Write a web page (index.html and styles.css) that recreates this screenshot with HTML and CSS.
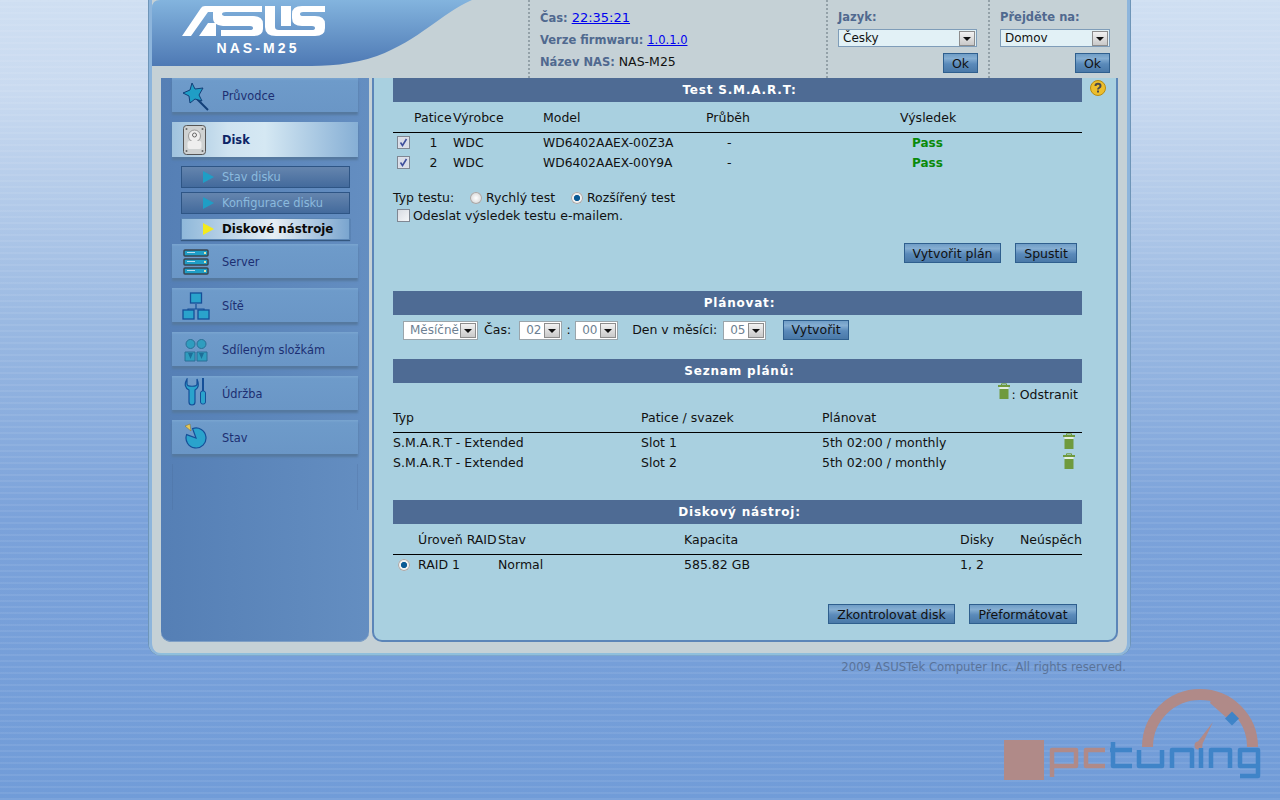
FILE: index.html
```html
<!DOCTYPE html>
<html lang="cs">
<head>
<meta charset="utf-8">
<title>ASUS NAS-M25</title>
<link rel="stylesheet" href="styles.css">
</head>
<body>
<svg class="defs" width="0" height="0" aria-hidden="true">
  <symbol id="trash" viewBox="0 0 14 17">
    <path d="M4.5 2V.8h5V2" fill="none" stroke="#6f9a3e"/>
    <rect x="1" y="2" width="12" height="2" fill="#6f9a3e"/>
    <rect x="2.5" y="4" width="9" height="2" fill="#e4efe0"/>
    <path d="M2.500 6h9v10h-9z" fill="#6f9a3e"/>
  </symbol>
  <symbol id="check" viewBox="0 0 13 13">
    <rect x=".5" y=".5" width="12" height="12" fill="#dfe3ec" stroke="#7f8793"/>
    <rect x="1.500" y="1.500" width="10" height="10" fill="#d9dde8"/>
    <path d="M3.500 6.500l2 3 4-6.500" fill="none" stroke="#3e4f9c" stroke-width="1.600"/>
  </symbol>
</svg>
<div class="shell">
  <header class="head">
    <svg class="head-art" viewBox="0 0 330 66" width="330" height="66" aria-hidden="true">
      <defs>
        <linearGradient id="hg" x1="0" y1="0" x2="0" y2="1"><stop offset="0" stop-color="#83b4de"/><stop offset="1" stop-color="#4e79b4"/></linearGradient>
      </defs>
      <path d="M0 8Q0 0 8 0H320C288 14 268 40 225 56C200 65 175 66 150 66H0Z" fill="url(#hg)"/>
    </svg>
    <div class="brand">
      <svg class="logo" viewBox="182 6 144 31" width="144" height="31" role="img" aria-label="ASUS">
        <path fill="#fff" d="M182 36L201 8Q202 6 205 6H262V12H226Q222 12 222 14Q222 16 226 16H253Q263 16 263 24V29Q263 36 253 36H221V30H250Q253 30 253 28Q253 26 250 26H226Q213 26 213 18V12H208L191 36ZM208 23H216V36H199Z"/>
        <path fill="#fff" d="M265 6H275V27Q275 30 279 30H290V36H276Q265 36 265 27ZM281 6H291V26H281Z"/>
        <path fill="#fff" d="M325 6V12H303Q300 12 300 14Q300 16 303 16H315Q325 16 325 24V28Q325 36 315 36H284V30H312Q315 30 315 28Q315 26 312 26H302Q292 26 292 18V14Q292 6 302 6Z"/>
      </svg>
      <div class="model">NAS-M25</div>
    </div>
    <div class="info">
      <div class="info-row"><b>Čas:</b> <a href="#" class="time-link">22:35:21</a></div>
      <div class="info-row"><b>Verze firmwaru:</b> <a href="#" class="small-link">1.0.1.0</a></div>
      <div class="info-row"><b>Název NAS:</b> NAS-M25</div>
    </div>
    <div class="pick pick-lang">
      <b>Jazyk:</b>
      <div class="sel sel-head sel-lang"><span>Česky</span><i class="arrow"></i></div>
      <div class="pick-ok"><button class="btn btn-ok">Ok</button></div>
    </div>
    <div class="pick pick-go">
      <b>Přejděte na:</b>
      <div class="sel sel-head sel-go"><span>Domov</span><i class="arrow"></i></div>
      <div class="pick-ok"><button class="btn btn-ok">Ok</button></div>
    </div>
  </header>

  <div class="body-row">
    <nav class="side">
      <a class="item">
        <span class="ico"><svg width="30" height="30" viewBox="0 0 30 30"><path d="M16 18L27 29" stroke="#123f78" stroke-width="2"/><path d="M11 2l3 6 8-1-4 7 3 6-7-2-5 4-1-7-6-3 7-3z" fill="#1f9ec6" stroke="#123f78"/></svg></span>Průvodce
      </a>
      <a class="item item-on">
        <span class="ico ico-disk"><svg width="23" height="30" viewBox="0 0 23 30"><rect x=".5" y=".5" width="22" height="29" rx="3" fill="#cfd2d2" stroke="#555"/><circle cx="11.500" cy="11" r="6" fill="#eee" stroke="#999"/><circle cx="11.500" cy="10" r="2" fill="none" stroke="#666"/><rect x="4.500" y="16" width="14" height="8" rx="2" fill="#eee"/><g fill="#666"><circle cx="3.500" cy="4" r="1"/><circle cx="19.500" cy="4" r="1"/><circle cx="3.500" cy="26" r="1"/><circle cx="19.500" cy="26" r="1"/></g></svg></span>Disk
      </a>
      <div class="subs">
        <a class="sub"><i class="tri"></i>Stav disku</a>
        <a class="sub"><i class="tri"></i>Konfigurace disku</a>
        <a class="sub sub-on"><i class="tri"></i>Diskové nástroje</a>
      </div>
      <a class="item">
        <span class="ico"><svg width="26" height="26" viewBox="0 0 26 26"><g fill="#1f9ec6" stroke="#3a4550" stroke-width="1.500"><rect x="1" y="1" width="24" height="6" rx="1"/><rect x="1" y="10" width="24" height="6" rx="1"/><rect x="1" y="19" width="24" height="6" rx="1"/></g><g fill="#e0e6b0"><rect x="21" y="3" width="2" height="2"/><rect x="21" y="12" width="2" height="2"/><rect x="21" y="21" width="2" height="2"/></g><g fill="#bde"><rect x="4" y="3" width="8" height="1"/><rect x="4" y="12" width="8" height="1"/><rect x="4" y="21" width="8" height="1"/></g></svg></span>Server
      </a>
      <a class="item">
        <span class="ico"><svg width="28" height="28" viewBox="0 0 28 28"><path d="M14 12V17M6 22V17H22V22" fill="none" stroke="#154f98" stroke-width="1.200"/><g fill="#2aa3cc" stroke="#154f98" stroke-width="1.300"><rect x="8.500" y="1" width="11" height="10"/><rect x="1" y="18" width="11" height="9"/><rect x="16" y="18" width="11" height="9"/></g></svg></span>Sítě
      </a>
      <a class="item">
        <span class="ico"><svg width="24" height="24" viewBox="0 0 24 24"><g fill="#2f9dbf" stroke="#2a6f96"><circle cx="6.500" cy="6" r="4.500"/><circle cx="17.500" cy="6" r="4.500"/><path d="M1 14h10v9H1zM13 14h10v9H13z"/></g><path d="M4 15l2.500 6 2.500-6M15 15l2.500 6 2.500-6" fill="#1c6f98"/></svg></span>Sdíleným složkám
      </a>
      <a class="item">
        <span class="ico ico-up"><svg width="24" height="28" viewBox="0 0 24 28"><path d="M3 1C0 6 1 10 5 12V24C5 28 11 28 11 24V12C15 10 15 6 13 1V6C13 9 3 9 3 6Z" fill="#2aa3cc" stroke="#154f98" stroke-width="1.200"/><rect x="18" y="0" width="2" height="13" fill="#154f98"/><rect x="16.500" y="13" width="5" height="13" rx="2" fill="#2aa3cc" stroke="#154f98"/></svg></span>Údržba
      </a>
      <a class="item">
        <span class="ico ico-up"><svg width="24" height="26" viewBox="0 0 24 26"><path d="M12 15L8.600 5.600A10 10 0 1 1 2.600 11.600Z" fill="#2aa3cc" stroke="#154f98" stroke-width="1.200"/><path d="M1 3L6 1 7 8Z" fill="#e6c95a" stroke="#7a6a30" stroke-width=".5"/></svg></span>Stav
      </a>
      <div class="trail"></div>
    </nav>

    <main class="panel">
      <svg class="help" width="16" height="16" viewBox="0 0 16 16" role="img" aria-label="Nápověda"><circle cx="8" cy="8" r="7.500" fill="#edbe2c" stroke="#b88c10"/><path d="M5.500 6C5.500 3 10.500 3 10.500 6C10.500 8 8 7.500 8 9.500" fill="none" stroke="#4a4a4a" stroke-width="2"/><rect x="7" y="10.500" width="2" height="2" fill="#4a4a4a"/></svg>

      <h2 class="bar">Test S.M.A.R.T:</h2>
      <div class="grid g-smart thead"><span></span><span>Patice</span><span>Výrobce</span><span>Model</span><span>Průběh</span><span>Výsledek</span></div>
      <div class="grid g-smart row"><svg class="cb"><use href="#check"/></svg><span class="num">1</span><span>WDC</span><span class="serial">WD6402AAEX-00Z3A</span><span class="dash">-</span><span class="pass">Pass</span></div>
      <div class="grid g-smart row"><svg class="cb"><use href="#check"/></svg><span class="num">2</span><span>WDC</span><span class="serial">WD6402AAEX-00Y9A</span><span class="dash">-</span><span class="pass">Pass</span></div>

      <div class="testtype"><span class="tt-label">Typ testu:</span><i class="radio"></i><span class="tt-a">Rychlý test</span><i class="radio radio-on"></i><span>Rozšířený test</span></div>
      <div class="mailopt"><i class="box"></i>Odeslat výsledek testu e-mailem.</div>
      <div class="actions act-smart"><button class="btn b-plan">Vytvořit plán</button><button class="btn b-run">Spustit</button></div>

      <h2 class="bar bar-plan">Plánovat:</h2>
      <div class="planrow">
        <div class="sel sel-m"><span>Měsíčně</span><i class="arrow"></i></div>
        <span class="lbl-time">Čas:</span>
        <div class="sel sel-t"><span>02</span><i class="arrow"></i></div>
        <span class="colon">:</span>
        <div class="sel sel-t"><span>00</span><i class="arrow"></i></div>
        <span class="lbl-day">Den v měsíci:</span>
        <div class="sel sel-t"><span>05</span><i class="arrow"></i></div>
        <button class="btn b-make">Vytvořit</button>
      </div>

      <h2 class="bar bar-list">Seznam plánů:</h2>
      <div class="legend"><svg class="trash"><use href="#trash"/></svg><span>: Odstranit</span></div>
      <div class="grid g-list thead thead-list"><span>Typ</span><span>Patice / svazek</span><span>Plánovat</span><span></span></div>
      <div class="grid g-list row"><span>S.M.A.R.T - Extended</span><span>Slot 1</span><span>5th 02:00 / monthly</span><svg class="trash"><use href="#trash"/></svg></div>
      <div class="grid g-list row"><span>S.M.A.R.T - Extended</span><span>Slot 2</span><span>5th 02:00 / monthly</span><svg class="trash"><use href="#trash"/></svg></div>

      <h2 class="bar bar-tool">Diskový nástroj:</h2>
      <div class="grid g-raid thead"><span></span><span>Úroveň RAID</span><span>Stav</span><span>Kapacita</span><span>Disky</span><span>Neúspěch</span></div>
      <div class="grid g-raid row"><i class="radio radio-on"></i><span>RAID 1</span><span>Normal</span><span>585.82 GB</span><span>1, 2</span><span></span></div>
      <div class="actions act-tool"><button class="btn b-check">Zkontrolovat disk</button><button class="btn b-format">Přeformátovat</button></div>
    </main>
  </div>
</div>
<footer class="copy">2009 ASUSTek Computer Inc. All rights reserved.</footer>

<svg class="mark" viewBox="1000 685 265 100" width="265" height="100" role="img" aria-label="pctuning">
  <rect x="1004" y="740" width="40" height="40" fill="#b08a88"/>
  <path d="M1147.500 747A52.500 52.500 0 0 1 1252.500 747" fill="none" stroke="#b08a88" stroke-width="11"/>
  <path d="M1210 703L1212 697L1236 709L1228 719Z" fill="#b08a88"/>
  <path d="M1232 711.500L1239 718.500 1232 725.500 1225 718.500Z" fill="#3f84c8"/>
  <path d="M1196 744L1213 722 1201 747Z" fill="#b08a88"/><circle cx="1198.500" cy="745.500" r="4" fill="#b08a88"/>
  <g fill="none" stroke-width="4.500" stroke-linejoin="round">
    <path stroke="#b08a88" d="M1052 777V750H1076V766H1052M1105 750H1086V766H1105"/>
    <path stroke="#3f84c8" d="M1110 750H1132M1113 742V766H1132M1139 750V766H1162V750M1172 768V750H1192V768M1201 748V768M1211 768V750H1230V768M1258 766H1240V750H1258V776H1240"/>
  </g>
</svg>
</body>
</html>
```
FILE: styles.css
```css
* { box-sizing: border-box; }
html, body { margin: 0; height: 800px; overflow: hidden; }
body {
  font: 12.5px/18px "DejaVu Sans", Verdana, sans-serif;
  color: #111;
  background:
    repeating-linear-gradient(180deg, rgba(255,255,255,.07) 0 2px, rgba(255,255,255,0) 2px 6px),
    linear-gradient(180deg, #cfdff2 0, #c9daf0 90px, #9ab9e2 320px, #7ba2da 520px, #719cd8 800px);
}
.defs { position: absolute; }
.shell {
  width: 981px;
  height: 655px;
  margin-left: 149px;
  padding: 0 12px 12px 3px;
  background: #c5d1d6;
  border-radius: 0 0 12px 12px;
  box-shadow: inset 3px 0 0 #8db5dc, inset -3px 0 0 #8db5dc, inset 0 -2px 0 #8fbfdc, -1px 0 0 #6e95b8, 1px 0 0 #6e95b8, 0 1px 0 #7fa8cc;
}
.head { display: flex; height: 78px; position: relative; }
.head > * { flex: none; }
.head-art { position: absolute; left: 0; top: 0; }
.brand { position: relative; width: 376px; padding: 6px 0 0 30px; }
.logo { display: block; }
.model { width: 144px; margin: 3px 0 0 4px; text-align: center; color: #fff; font: bold 14px/16px "Liberation Sans", Arial, sans-serif; letter-spacing: 3.100px; }
b { font-weight: bold; font-size: 11.500px; color: #50698f; }
a { color: #0000ee; text-decoration: underline; }
.info, .pick { position: relative; border-left: 2px dotted #93a1a8; }
.info { width: 298px; padding: 8px 0 0 10px; }
.info-row { height: 22px; line-height: 19px; white-space: nowrap; }
.small-link { font-size: 11.500px; }
.time-link { font-size: 13px; }
.pick { display: flex; flex-direction: column; padding: 8px 0 0 10px; }
.pick-lang { width: 162px; }
.pick-go { width: 130px; }
.pick-ok { display: flex; justify-content: flex-end; }
.pick-lang .pick-ok { width: 140px; }
.pick-go .pick-ok { width: 110px; }
.sel {
  display: flex;
  align-items: center;
  justify-content: space-between;
  flex: none;
  height: 18px;
  padding: 0 1px 0 4px;
  background: #fff;
  border: 1px solid #9aa5ab;
  font-size: 12px;
  color: #6d7f92;
}
.sel-head { margin-top: 3px; background: #e2f1f6; border-color: #7f9db9; color: #111; }
.sel-lang { width: 139px; margin-bottom: 6px; }
.sel-go { width: 110px; margin-bottom: 6px; }
.sel-m { width: 75px; padding-left: 6px; }
.sel-t { width: 43px; padding-left: 6px; }
.arrow {
  position: relative;
  display: block;
  flex: none;
  width: 16px;
  height: 15px;
  background: linear-gradient(#f2f2f2, #c9c9c9);
  border: 1px solid #8d8d8d;
}
.arrow::after {
  content: "";
  position: absolute;
  left: 3px;
  top: 5px;
  border: 4px solid transparent;
  border-top: 4px solid #111;
  border-bottom: 0;
}
.btn {
  display: block;
  height: 20px;
  padding: 0;
  font: 12.5px/17px "DejaVu Sans", Verdana, sans-serif;
  color: #111;
  background: linear-gradient(#6f9dc6 0, #85aed2 25%, #5a8aba 55%, #4a79a8 100%);
  border: 1px solid #2f5f8e;
}
.btn-ok { width: 35px; }

.body-row { display: flex; height: 564px; padding-left: 9px; }
.side {
  flex: none;
  width: 208px;
  padding-left: 11px;
  background: linear-gradient(90deg, #557fb5, #648ec1);
  border-radius: 0 0 10px 10px;
  box-shadow: inset 0 -1px 0 #7fa0c6;
}
.item {
  display: flex;
  align-items: center;
  width: 186px;
  height: 34px;
  margin-bottom: 10px;
  padding-top: 1px;
  font-size: 11.400px;
  color: #1c2f72;
  text-decoration: none;
  background: linear-gradient(180deg, #7aa5d0, #6e9bca 8%, #6a96c6 100%);
  box-shadow: 0 3px 2px #55799f;
}
.ico { display: flex; align-items: center; justify-content: center; flex: none; width: 50px; padding-right: 2px; }
.ico-disk { padding-right: 6px; }
.ico-up { margin-top: -4px; }
.item-on {
  height: 35px;
  margin-bottom: 0;
  font-weight: bold;
  color: #0d2466;
  background: linear-gradient(90deg, #a0c3de 0, #cfe3f0 30%, #d5e8f3 50%, #86afd5 100%);
}
.subs { display: flex; flex-direction: column; gap: 4px; width: 186px; padding: 9px 0 4px 9px; }
.sub {
  display: flex;
  align-items: center;
  width: 169px;
  height: 22px;
  padding-left: 21px;
  font-size: 11.400px;
  color: #8bbade;
  text-decoration: none;
  background: linear-gradient(#6585ae, #436a9c);
  border: 1px solid #2e5585;
}
.tri {
  flex: none;
  width: 0;
  height: 0;
  margin-right: 8px;
  border-left: 11px solid #1f9ec6;
  border-top: 6px solid transparent;
  border-bottom: 6px solid transparent;
}
.sub-on {
  font-size: 11.800px;
  font-weight: bold;
  color: #0a0a0a;
  background: linear-gradient(90deg, #8fb8da, #e7eff5 55%, #7aa5cf);
  border-color: #5b86b5;
  box-shadow: 0 1px 1px #34577f;
}
.sub-on .tri { border-left-color: #f4ea1c; }
.trail { width: 186px; height: 46px; border: solid rgba(70,105,150,.25); border-width: 0 1px; }

.panel {
  position: relative;
  flex: none;
  width: 746px;
  height: 564px;
  margin-left: 3px;
  padding: 0 34px 0 19px;
  background: #a9d0e0;
  border: solid #5b85b8;
  border-width: 0 2px 2px;
  border-radius: 0 0 10px 10px;
}
.help { position: absolute; left: 716px; top: 2px; }
.bar {
  margin: 0;
  height: 24px;
  padding-left: 4px;
  font: bold 12px/25px "DejaVu Sans", Verdana, sans-serif;
  letter-spacing: .82px;
  text-align: center;
  color: #fff;
  background: #4e6b94;
}
.bar-plan { margin-top: 28px; }
.bar-list { margin-top: 19px; }
.bar-tool { margin-top: 27px; }
.grid { display: grid; align-items: center; white-space: nowrap; }
.thead { height: 31px; padding-top: 1px; border-bottom: 1px solid #000; }
.thead-list { height: 30px; padding-top: 0; }
.row { height: 20px; }
.g-smart { grid-template-columns: 21px 39px 90px 163px 194px 1fr; }
.g-list { grid-template-columns: 248px 181px 240px 20px; }
.g-raid { grid-template-columns: 25px 80px 186px 276px 60px 1fr; }
.serial { font-size: 12.300px; }
.cb { display: block; width: 13px; height: 13px; margin: -2px 0 0 4px; }
.num { text-align: center; }
.dash { padding-left: 21px; }
.pass { padding-left: 12px; font-weight: bold; font-size: 12px; color: #0a8a0a; }
.trash { display: block; width: 14px; height: 17px; }
.row .trash { margin-top: -3px; }
.testtype { display: flex; align-items: center; height: 18px; margin-top: 16px; }
.tt-label { width: 77px; }
.tt-a { width: 85px; }
.radio {
  display: block;
  flex: none;
  width: 12px;
  height: 12px;
  margin-right: 4px;
  border-radius: 50%;
  background: radial-gradient(circle, #fff 0, #d8d8d8 70%, #9a9a9a 100%);
  box-shadow: inset 0 0 0 1px #a8a8a8;
}
.radio-on { background: radial-gradient(circle, #0a5a95 0 2.800px, #f0f0f0 3.300px 100%); }
.g-raid .radio { margin-left: 5px; }
.mailopt { display: flex; align-items: center; height: 18px; padding-left: 4px; }
.box { display: block; width: 13px; height: 13px; margin: -2px 3px 0 0; background: linear-gradient(135deg, #d8dce3, #f5f6f8); border: 1px solid #7f8793; }
.actions { display: flex; justify-content: flex-end; gap: 14px; padding-right: 5px; }
.act-smart { margin-top: 18px; }
.act-tool { margin-top: 29px; }
.b-plan { width: 97px; }
.b-run { width: 62px; }
.b-check { width: 127px; }
.b-format { width: 108px; }
.b-make { flex: none; width: 66px; margin-left: 17px; margin-top: -1px; }
.planrow { display: flex; align-items: center; height: 20px; margin-top: 5px; padding-left: 10px; white-space: nowrap; }
.planrow .sel { height: 19px; }
.lbl-time { margin-left: 6px; margin-right: 8px; }
.colon { width: 13px; text-align: center; }
.lbl-day { margin-left: 14px; margin-right: 6px; }
.legend { display: flex; justify-content: flex-end; align-items: center; height: 20px; padding-right: 4px; }
.legend .trash { margin-top: -3px; }
.legend span { margin-left: 1px; margin-top: 4px; }
.copy {
  width: 977px;
  margin: 3px 0 0 149px;
  text-align: right;
  font-size: 11.700px;
  line-height: 18px;
  color: #5a7398;
}
.mark { position: absolute; left: 1000px; top: 685px; }
```
